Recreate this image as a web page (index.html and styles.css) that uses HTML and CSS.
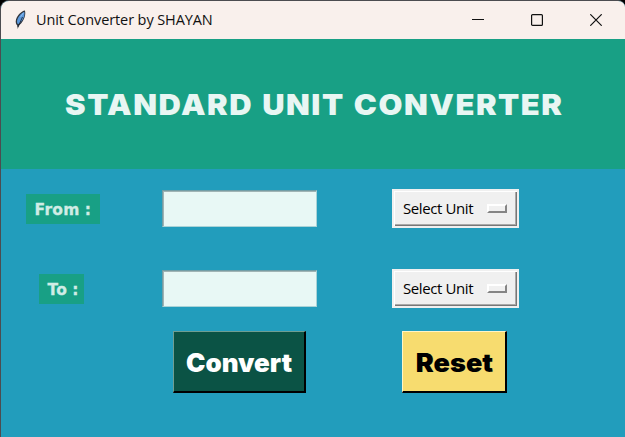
FILE: index.html
```
<!DOCTYPE html>
<html lang="en">
<head>
<meta charset="utf-8">
<title>Unit Converter by SHAYAN</title>
<link rel="stylesheet" href="styles.css">
</head>
<body>
<main class="window">
  <header class="titlebar">
    <svg class="feather" width="14" height="20" viewBox="0 0 14 20">
      <path d="M11 .5C7.500 1 3.500 5 2 9.500c-.8 3 .2 5 1.200 6L3.800 19l1-3.200C8 13 12.500 7 11 .5Z" fill="#30343c"/>
      <path d="M10.300 1.800C7 3.500 3.800 7 3 11L3.200 13.500 5 14C8 11 11.300 7 10.300 1.800Z" fill="#5a98dc"/>
      <path d="M9.500 2.800 6.500 7" stroke="#8bbcf0" fill="none"/>
      <path d="M8.500 7 4 17" stroke="#17202c" stroke-width=".8" fill="none"/>
    </svg>
    <span class="caption">Unit Converter by SHAYAN</span>
    <div class="controls">
      <svg width="12" height="12" viewBox="0 0 12 12"><path d="M0 5.500h12"/></svg>
      <svg width="12" height="12" viewBox="0 0 12 12"><rect x=".6" y=".6" width="10.800" height="10.800" rx="1"/></svg>
      <svg width="12" height="12" viewBox="0 0 12 12"><path d="m.3.3 11.400 11.400M11.700.3.3 11.700"/></svg>
    </div>
  </header>
  <section class="banner"><h1>STANDARD UNIT CONVERTER</h1></section>
  <form class="form">
    <div class="row">
      <label class="tag" for="from"><span>From :</span></label>
      <input class="entry" id="from" type="text">
      <button class="menu" type="button"><span>Select Unit</span><i></i></button>
    </div>
    <div class="row">
      <label class="tag tag-to" for="to"><span>To :</span></label>
      <input class="entry" id="to" type="text">
      <button class="menu" type="button"><span>Select Unit</span><i></i></button>
    </div>
    <div class="actions">
      <button class="btn convert" type="button"><span>Convert</span></button>
      <button class="btn reset" type="button"><span>Reset</span></button>
    </div>
  </form>
</main>
</body>
</html>
```
FILE: styles.css
```
* { box-sizing: border-box; }
body { margin: 0; background: #000; overflow: hidden; }
.window {
  width: 625px;
  height: 437px;
  border: solid #4c4c50;
  border-width: 1px 0 0 1px;
  border-radius: 9px 7px 0 0;
  background: #229dbc;
  overflow: hidden;
}
.titlebar {
  height: 38px;
  display: flex;
  align-items: center;
  background: #f9f0ec;
  padding: 0 23px 0 13px;
}
.feather { margin-top: -1px; }
.caption {
  margin-left: 8px;
  font: 14.5px/20px "Open Sans", sans-serif;
  letter-spacing: -.1px;
  color: #111;
  white-space: nowrap;
}
.controls { margin-left: auto; display: flex; gap: 47px; }
.controls svg { fill: none; stroke: #111; stroke-width: 1.200; }
.banner {
  height: 130px;
  background: #18a085;
  display: flex;
  align-items: center;
  padding-left: 64px;
}
h1 {
  margin: 1px 0 0;
  font: 900 29px/40px Inter, sans-serif;
  letter-spacing: 1.450px;
  word-spacing: 1.300px;
  transform: scaleX(1.066);
  transform-origin: left;
  color: #e8f6f3;
  white-space: nowrap;
}
.form { padding-top: 20px; }
.row {
  height: 39px;
  margin-bottom: 41px;
  display: grid;
  grid-template-columns: 161px 230px 127px;
  align-items: center;
}
.tag {
  width: 74px;
  height: 30px;
  margin-left: 24.500px;
  padding-left: 9px;
  background: #18a085;
  color: #d0ece5;
  font: bold 15.500px/32px "DejaVu Sans", sans-serif;
  letter-spacing: .3px;
  word-spacing: -.7px;
  -webkit-text-stroke: .3px #d0ece5;
  white-space: nowrap;
}
.tag-to { width: 45px; margin-left: 37.500px; }
.entry {
  width: 155px;
  height: 37px;
  padding: 0 4px;
  border: 1px solid;
  border-color: #719da5 #a9d3d7 #a9d3d7 #719da5;
  box-shadow: inset 1px 1px #a0b4b4;
  background: #e8f8f5;
  border-radius: 0;
  outline: none;
}
.menu {
  width: 127px;
  height: 39px;
  border: 2px solid #f0f0f0;
  padding: 0 10px 0 9px;
  display: flex;
  align-items: center;
  justify-content: space-between;
  background: #f0f0f0;
  box-shadow: inset 1px 1px #fff, inset -1px -1px #777, inset -2px -2px #aaa;
  font: 15px/20px "Open Sans", sans-serif;
  letter-spacing: -.4px;
  color: #000;
}
.menu span { margin-top: -2px; }
.menu i {
  width: 20px;
  height: 9px;
  border: 2px solid;
  border-color: #fff #858585 #858585 #fff;
}
.actions {
  margin-top: -18px;
  padding-left: 172px;
  display: flex;
  align-items: flex-start;
  gap: 96px;
}
.btn {
  height: 62px;
  padding: 2px 0 0;
  border: solid;
  font: 900 25.500px/56px Inter, sans-serif;
  white-space: nowrap;
}
.btn span { display: inline-block; transform: scaleX(1.02); }
.convert {
  width: 133px;
  border-width: 1px 2px 2px 1px;
  border-color: #6f9e92 #000 #000 #6f9e92;
  background: #0b5345;
  color: #fff;
}
.reset {
  width: 105px;
  border-width: 1px 2px 2px 1px;
  border-color: #fff5c7 #000 #000 #fff5c7;
  background: #f7dc6f;
  color: #000;
}
.reset span { transform: scaleX(1.06); }
```
